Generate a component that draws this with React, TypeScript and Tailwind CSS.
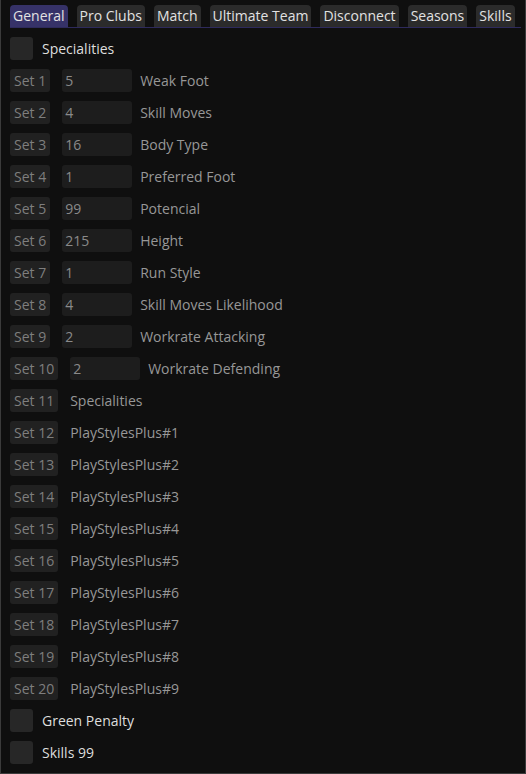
import React from 'react';

const tabs = ['General', 'Pro Clubs', 'Match', 'Ultimate Team', 'Disconnect', 'Seasons', 'Skills'];

const valueRows = [
  { id: 1, value: '5', label: 'Weak Foot' },
  { id: 2, value: '4', label: 'Skill Moves' },
  { id: 3, value: '16', label: 'Body Type' },
  { id: 4, value: '1', label: 'Preferred Foot' },
  { id: 5, value: '99', label: 'Potencial' },
  { id: 6, value: '215', label: 'Height' },
  { id: 7, value: '1', label: 'Run Style' },
  { id: 8, value: '4', label: 'Skill Moves Likelihood' },
  { id: 9, value: '2', label: 'Workrate Attacking' },
  { id: 10, value: '2', label: 'Workrate Defending' },
];

const textRows = [
  { id: 11, label: 'Specialities' },
  ...Array.from({ length: 9 }, (_, i) => ({ id: 12 + i, label: `PlayStylesPlus#${i + 1}` })),
];

function Checkbox({ label }: { label: string }) {
  return (
    <div className="flex items-center h-[23px] gap-[9px]">
      <div className="w-[23px] h-[23px] bg-[#272727] rounded-[3px]" />
      <span className="text-[#dedede]">{label}</span>
    </div>
  );
}

function SetButton({ id }: { id: number }) {
  return (
    <div className="h-[23px] px-[4px] flex items-center bg-[#212121] rounded-[3px] text-[#7e7e7e]">
      Set {id}
    </div>
  );
}

export default function App() {
  return (
    <div
      className="w-[526px] h-[774px] bg-[#0f0f0f] border-l border-r border-b border-[#3b3b3b] text-[14px] leading-none overflow-hidden"
      style={{ fontFamily: '"Open Sans", "Noto Sans", sans-serif' }}
    >
      <div className="pl-[9px] pr-[4px] pt-[5px]">
        <div className="flex gap-[9px] border-b border-[#2e2a5c]">
          {tabs.map((tab, i) => (
            <div
              key={tab}
              className={`h-[22px] px-[3px] flex items-center rounded-t-[4px] text-[#e2e2e2] ${
                i === 0 ? 'bg-[#363268]' : 'bg-[#2b2b2b]'
              }`}
            >
              {tab}
            </div>
          ))}
        </div>
      </div>

      <div className="pl-[9px] pt-[9px] flex flex-col gap-[9px]">
        <Checkbox label="Specialities" />

        {valueRows.map(row => (
          <div key={row.id} className="flex items-center h-[23px]">
            <SetButton id={row.id} />
            <div className="ml-[12px] w-[70px] h-[23px] px-[3px] flex items-center bg-[#1d1d1d] rounded-[3px] text-[#8a8a8a]">
              {row.value}
            </div>
            <span className="ml-[8px] text-[#979797]">{row.label}</span>
          </div>
        ))}

        {textRows.map(row => (
          <div key={row.id} className="flex items-center h-[23px]">
            <SetButton id={row.id} />
            <span className="ml-[12px] text-[#979797]">{row.label}</span>
          </div>
        ))}

        <Checkbox label="Green Penalty" />
        <Checkbox label="Skills 99" />
      </div>
    </div>
  );
}
